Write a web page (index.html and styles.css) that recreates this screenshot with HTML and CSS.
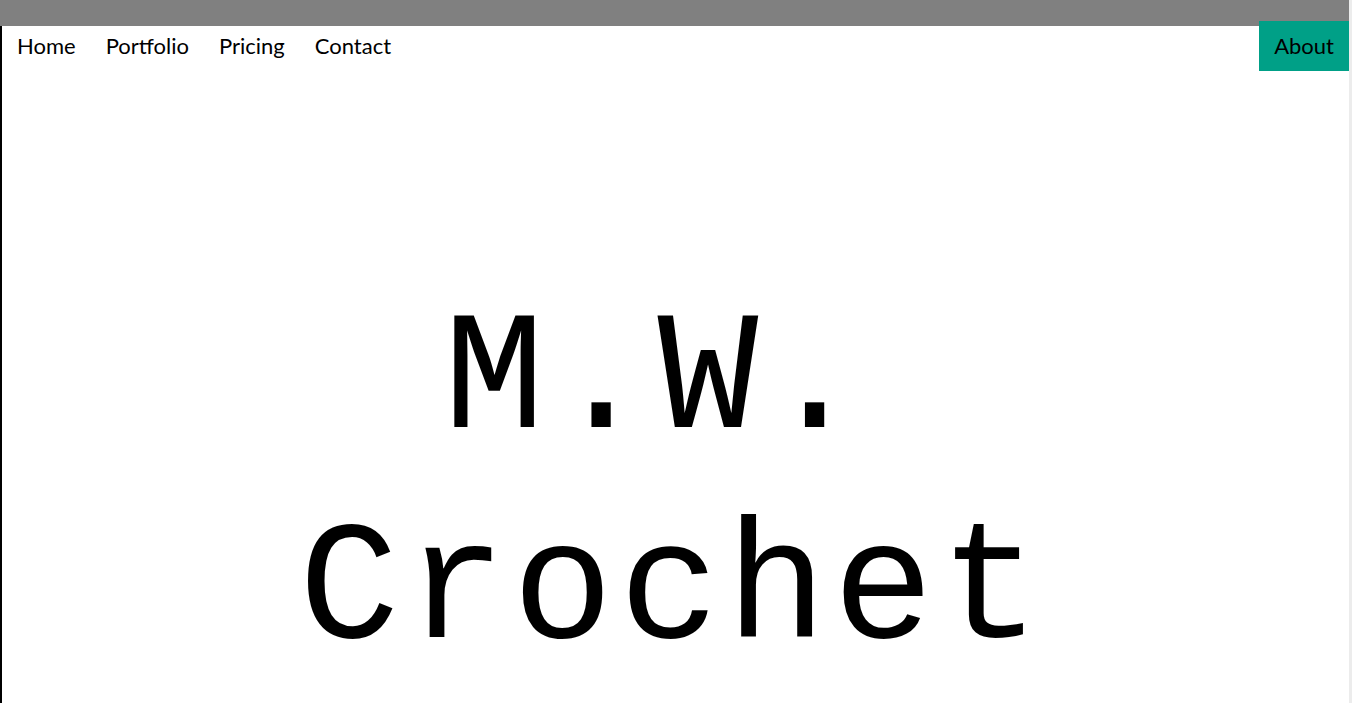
FILE: index.html
```html
<html>
<head>
    <title>M.W. Crochet</title>
    <link rel="stylesheet" href="styles.css">
</head>
<body>
    <div class="window">
        <div class="topbar"></div>

        <div class="page">
            <nav class="menu">
                <a href="#">Home</a>
                <a href="#">Portfolio</a>
                <a href="#">Pricing</a>
                <a href="#">Contact</a>
                <a href="#" class="about">About</a>
            </nav>

            <header class="hero">
                <span class="line first">M.W.</span>
                <span class="line">Crochet</span>
            </header>
        </div>
    </div>
</body>
</html>
```

FILE: styles.css
```css
body {
    margin: 0;
    font-family: Lato, "Open Sans", sans-serif;
    background-color: #fdfdfd;
    overflow: hidden;
}

.window {
    height: 703px;
    border-right: 3px solid #ececec;
    overflow: hidden;
}

.topbar {
    height: 26px;
    background-color: #808080;
}

.page {
    display: flow-root;
    border-left: 2px solid #000;
    height: 677px;
    background-color: #fff;
}

.menu {
    display: flex;
    height: 50px;
    margin-top: -5px;
    position: relative;
}

.menu a {
    display: block;
    padding: 0 15px;
    line-height: 50px;
    font-size: 22px;
    color: #000;
    text-decoration: none;
}

.menu .about {
    margin-left: auto;
    background-color: #00a087;
}

.hero {
    margin-top: 206px;
    padding-right: 6px;
    text-align: center;
    font-family: "Liberation Mono", monospace;
    font-size: 168px;
    letter-spacing: 6px;
    line-height: 210px;
    color: #000;
}

.hero .line {
    display: block;
}

.hero .first {
    padding-right: 30px;
}
```
